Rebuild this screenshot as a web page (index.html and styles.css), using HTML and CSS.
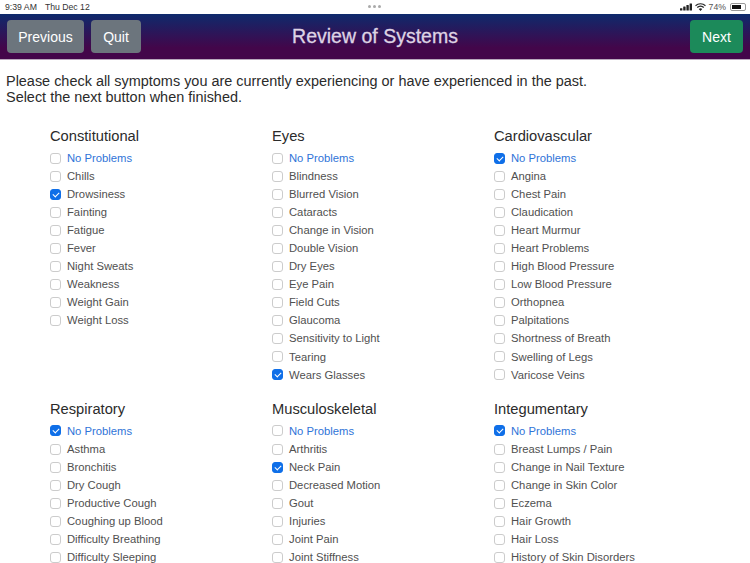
FILE: index.html
```html
<!DOCTYPE html>
<html lang="en">

<head>
    <meta charset="UTF-8">
    <meta name="viewport" content="width=device-width, initial-scale=1.0">
    <title>Review of Systems</title>
    <link rel="stylesheet" href="styles.css">
</head>

<body>
    <div class="status-bar">
        <div class="status-left"><span>9:39 AM</span><span>Thu Dec 12</span></div>
        <div class="status-dots"><i></i><i></i><i></i></div>
        <div class="status-right">
            <svg width="12" height="8" viewBox="0 0 15 9"><rect x="0" y="6" width="3" height="3" rx=".5"/><rect x="4" y="4" width="3" height="5" rx=".5"/><rect x="8" y="2" width="3" height="7" rx=".5"/><rect x="12" y="0" width="3" height="9" rx=".5"/></svg>
            <svg width="11" height="8" viewBox="0 0 12 9"><path d="M6 9 4 6.8a2.9 2.9 0 0 1 4 0zM2.9 5.7 1.8 4.6a6 6 0 0 1 8.4 0L9.1 5.7a4.5 4.5 0 0 0-6.2 0zM.8 3.6 0 2.6a8.6 8.6 0 0 1 12 0l-.8 1a7.2 7.2 0 0 0-10.4 0z"/></svg>
            <span>74%</span>
            <div class="battery"><div class="battery-level"></div></div>
        </div>
    </div>

    <header class="topbar">
        <div class="topbar-left">
            <button class="btn btn-grey btn-previous">Previous</button>
            <button class="btn btn-grey btn-quit">Quit</button>
        </div>
        <h1>Review of Systems</h1>
        <button class="btn btn-green btn-next">Next</button>
    </header>

    <p class="intro">Please check all symptoms you are currently experiencing or have experienced in the past.<br>Select the next button when finished.</p>

    <main class="systems">
        <section class="system">
            <h2>Constitutional</h2>
            <label class="symptom none"><input type="checkbox">No Problems</label>
            <label class="symptom"><input type="checkbox">Chills</label>
            <label class="symptom"><input type="checkbox" checked>Drowsiness</label>
            <label class="symptom"><input type="checkbox">Fainting</label>
            <label class="symptom"><input type="checkbox">Fatigue</label>
            <label class="symptom"><input type="checkbox">Fever</label>
            <label class="symptom"><input type="checkbox">Night Sweats</label>
            <label class="symptom"><input type="checkbox">Weakness</label>
            <label class="symptom"><input type="checkbox">Weight Gain</label>
            <label class="symptom"><input type="checkbox">Weight Loss</label>
        </section>
        <section class="system">
            <h2>Eyes</h2>
            <label class="symptom none"><input type="checkbox">No Problems</label>
            <label class="symptom"><input type="checkbox">Blindness</label>
            <label class="symptom"><input type="checkbox">Blurred Vision</label>
            <label class="symptom"><input type="checkbox">Cataracts</label>
            <label class="symptom"><input type="checkbox">Change in Vision</label>
            <label class="symptom"><input type="checkbox">Double Vision</label>
            <label class="symptom"><input type="checkbox">Dry Eyes</label>
            <label class="symptom"><input type="checkbox">Eye Pain</label>
            <label class="symptom"><input type="checkbox">Field Cuts</label>
            <label class="symptom"><input type="checkbox">Glaucoma</label>
            <label class="symptom"><input type="checkbox">Sensitivity to Light</label>
            <label class="symptom"><input type="checkbox">Tearing</label>
            <label class="symptom"><input type="checkbox" checked>Wears Glasses</label>
        </section>
        <section class="system">
            <h2>Cardiovascular</h2>
            <label class="symptom none"><input type="checkbox" checked>No Problems</label>
            <label class="symptom"><input type="checkbox">Angina</label>
            <label class="symptom"><input type="checkbox">Chest Pain</label>
            <label class="symptom"><input type="checkbox">Claudication</label>
            <label class="symptom"><input type="checkbox">Heart Murmur</label>
            <label class="symptom"><input type="checkbox">Heart Problems</label>
            <label class="symptom"><input type="checkbox">High Blood Pressure</label>
            <label class="symptom"><input type="checkbox">Low Blood Pressure</label>
            <label class="symptom"><input type="checkbox">Orthopnea</label>
            <label class="symptom"><input type="checkbox">Palpitations</label>
            <label class="symptom"><input type="checkbox">Shortness of Breath</label>
            <label class="symptom"><input type="checkbox">Swelling of Legs</label>
            <label class="symptom"><input type="checkbox">Varicose Veins</label>
        </section>
        <section class="system">
            <h2>Respiratory</h2>
            <label class="symptom none"><input type="checkbox" checked>No Problems</label>
            <label class="symptom"><input type="checkbox">Asthma</label>
            <label class="symptom"><input type="checkbox">Bronchitis</label>
            <label class="symptom"><input type="checkbox">Dry Cough</label>
            <label class="symptom"><input type="checkbox">Productive Cough</label>
            <label class="symptom"><input type="checkbox">Coughing up Blood</label>
            <label class="symptom"><input type="checkbox">Difficulty Breathing</label>
            <label class="symptom"><input type="checkbox">Difficulty Sleeping</label>
        </section>
        <section class="system">
            <h2>Musculoskeletal</h2>
            <label class="symptom none"><input type="checkbox">No Problems</label>
            <label class="symptom"><input type="checkbox">Arthritis</label>
            <label class="symptom"><input type="checkbox" checked>Neck Pain</label>
            <label class="symptom"><input type="checkbox">Decreased Motion</label>
            <label class="symptom"><input type="checkbox">Gout</label>
            <label class="symptom"><input type="checkbox">Injuries</label>
            <label class="symptom"><input type="checkbox">Joint Pain</label>
            <label class="symptom"><input type="checkbox">Joint Stiffness</label>
        </section>
        <section class="system">
            <h2>Integumentary</h2>
            <label class="symptom none"><input type="checkbox" checked>No Problems</label>
            <label class="symptom"><input type="checkbox">Breast Lumps / Pain</label>
            <label class="symptom"><input type="checkbox">Change in Nail Texture</label>
            <label class="symptom"><input type="checkbox">Change in Skin Color</label>
            <label class="symptom"><input type="checkbox">Eczema</label>
            <label class="symptom"><input type="checkbox">Hair Growth</label>
            <label class="symptom"><input type="checkbox">Hair Loss</label>
            <label class="symptom"><input type="checkbox">History of Skin Disorders</label>
        </section>
    </main>
</body>
</html>
```

FILE: styles.css
```css
html,
body {
    height: 563px;
    overflow: hidden;
}

body {
    margin: 0;
    font-family: "Liberation Sans", Arial, sans-serif;
    color: #212529;
    background-color: #fff;
}

.status-bar {
    height: 14px;
    display: flex;
    align-items: center;
    justify-content: space-between;
    padding: 0 4px 0 5px;
    font-size: 8.7px;
    color: #333;
    position: relative;
}

.status-left {
    display: flex;
    gap: 8px;
}

.status-dots {
    position: absolute;
    left: 368px;
    top: 5px;
    display: flex;
    gap: 2px;
}

.status-dots i {
    width: 3px;
    height: 3px;
    border-radius: 50%;
    background-color: #aaa;
}

.status-right {
    display: flex;
    align-items: center;
    gap: 3px;
}

.status-right span {
    color: #555;
}

.status-right svg {
    fill: #222;
}

.battery {
    width: 16px;
    height: 8px;
    border: 1px solid #999;
    border-radius: 2px;
    padding: 1px;
    box-sizing: border-box;
    margin-left: 1px;
}

.battery-level {
    width: 74%;
    height: 100%;
    background-color: #111;
}

.topbar {
    height: 45px;
    padding: 0 7px;
    display: flex;
    align-items: center;
    justify-content: space-between;
    position: relative;
    background: linear-gradient(#0e2a6c, #43064a 75%);
    border-bottom: 1px solid #b9a9bd;
    box-sizing: content-box;
}

.topbar-left {
    display: flex;
    gap: 7px;
}

.btn {
    height: 33px;
    padding: 0;
    border: none;
    border-radius: 4px;
    color: #fff;
    font-family: inherit;
    font-size: 14px;
}

.btn-grey {
    background-color: #6c757d;
}

.btn-green {
    background-color: #1c8a5a;
}

.btn-previous {
    width: 77px;
}

.btn-quit {
    width: 50px;
}

.btn-next {
    width: 53px;
}

.topbar h1 {
    position: absolute;
    left: 0;
    right: 0;
    margin: 0;
    text-align: center;
    font-size: 19.5px;
    font-weight: normal;
    -webkit-text-stroke: 0.3px #ded3e4;
    color: #ded3e4;
    pointer-events: none;
}

.intro {
    margin: 13px 0 0 6px;
    font-size: 14.45px;
    line-height: 16px;
    color: #2b2b2b;
}

.systems {
    display: grid;
    grid-template-columns: repeat(3, 222px);
    row-gap: 14.35px;
    padding: 20px 0 0 50px;
}

.system h2 {
    margin: 0 0 2px;
    font-size: 14.7px;
    line-height: 22px;
    font-weight: normal;
    color: #2b2b2b;
}

.symptom {
    display: flex;
    align-items: center;
    height: 18.05px;
    font-size: 11.25px;
    color: #505050;
}

.symptom.none {
    color: #2f74d8;
}

.symptom input {
    appearance: none;
    width: 11px;
    height: 11px;
    margin: 0 6px 0 0;
    border: 1px solid #ccc;
    border-radius: 3px;
    background-color: #fff;
    flex-shrink: 0;
    position: relative;
}

.symptom input:checked {
    background-color: #0f6fe8;
    border-color: #0f6fe8;
}

.symptom input:checked::after {
    content: "";
    position: absolute;
    left: 3px;
    top: 1px;
    width: 3px;
    height: 5px;
    border: solid #fff;
    border-width: 0 1.5px 1.5px 0;
    transform: rotate(45deg);
}
```
